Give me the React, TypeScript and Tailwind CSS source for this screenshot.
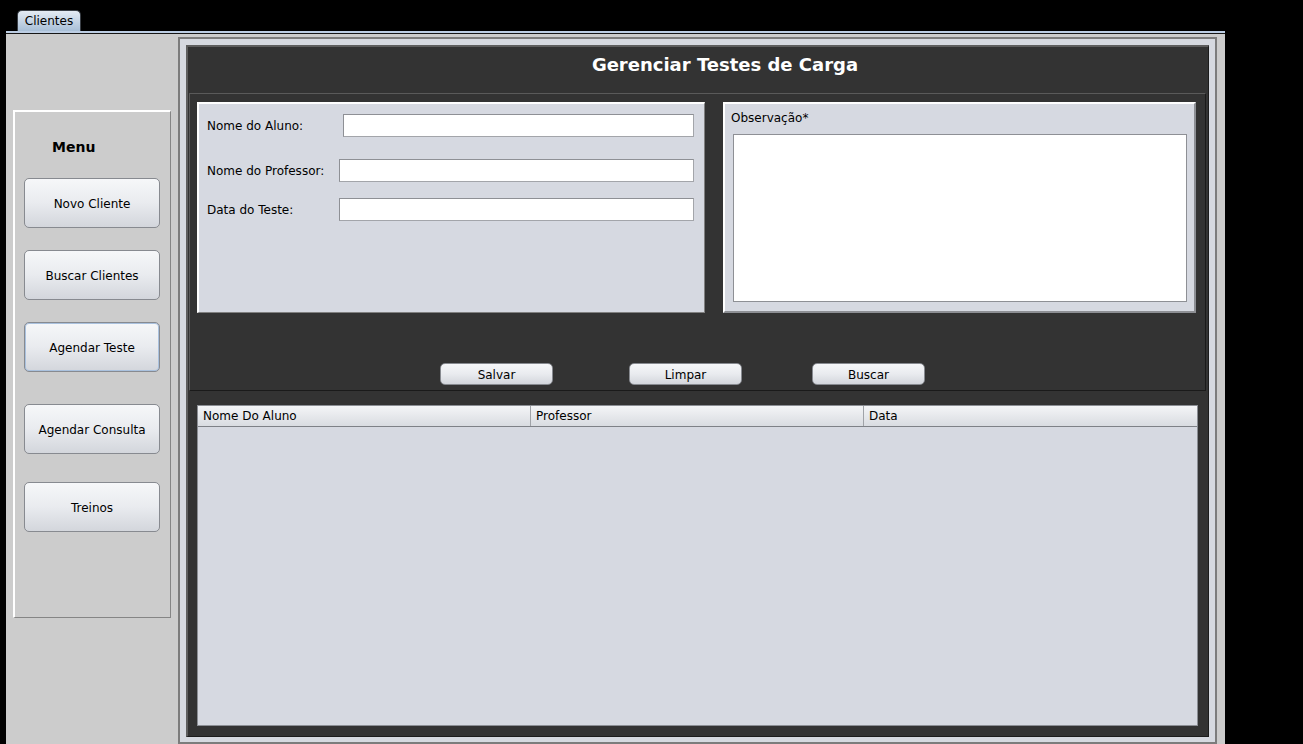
const BTN =
  'flex items-center justify-center pt-[1px] rounded-[5px] border border-[#878a90] bg-gradient-to-b from-[#f6f7f9] via-[#e9ebef] to-[#d3d6dc] text-[12px] text-black';

const INPUT = 'h-[23px] ml-auto mr-[10px] bg-white border border-[#a3a5aa] border-t-[#8e9095] border-l-[#8e9095]';

function MenuButton({ label, focused, mt }: { label: string; focused?: boolean; mt: string }) {
  return (
    <div
      className={`${BTN} ${mt} ml-[9px] w-[136px] h-[50px] ${
        focused ? 'border-[#7d9ec9] shadow-[0_0_0_1px_#a9c1de_inset]' : ''
      }`}
    >
      {label}
    </div>
  );
}

export default function App() {
  return (
    <div className="w-[1303px] h-[744px] bg-black overflow-hidden font-['DejaVu_Sans','Liberation_Sans',sans-serif] text-[12px] text-black">
      {/* tab strip */}
      <div className="h-[31px] pl-[17px] pt-[10px] flex">
        <div className="h-[21px] w-[64px] rounded-t-[5px] border border-b-0 border-[#3a3f46] bg-gradient-to-b from-[#e4ebf3] to-[#a8bfd7] flex items-center justify-center">
          Clientes
        </div>
      </div>

      <div className="ml-[6px] w-[1219px]">
        <div className="h-[2px] bg-[#bccde3]" />
        <div className="h-[1px] bg-[#161616]" />
        <div className="h-[710px] bg-[#cccccc] flex">
          {/* left menu column */}
          <div className="w-[172px] shrink-0 pt-[76px] pl-[7px]">
            <div className="w-[158px] h-[508px] border-t-2 border-l-2 border-white border-r border-b border-r-[#858585] border-b-[#858585] flex flex-col">
              <div className="pt-[27px] pl-[37px] h-[44px] leading-[17px] text-[14px] font-bold">Menu</div>
              <MenuButton label="Novo Cliente" mt="mt-[22px]" />
              <MenuButton label="Buscar Clientes" mt="mt-[22px]" />
              <MenuButton label="Agendar Teste" mt="mt-[22px]" focused />
              <MenuButton label="Agendar Consulta" mt="mt-[32px]" />
              <MenuButton label="Treinos" mt="mt-[28px]" />
            </div>
          </div>

          {/* main area */}
          <div className="flex-1 pt-[3px]">
            <div className="w-[1039px] h-[707px] border-2 border-[#7c7c7c] bg-[#d6d9e0] px-[6px] pt-[6px] pb-[5px] flex flex-col">
              <div className="flex-1 bg-[#333333] border-t-2 border-l-2 border-[#5e5e5e] border-r border-b border-r-[#1c1c1c] border-b-[#1c1c1c] flex flex-col">
                <div className="h-[46px] pt-[7px] pl-[54px] text-center text-white font-bold text-[18px] leading-[22px]">
                  Gerenciar Testes de Carga
                </div>

                {/* form panel */}
                <div className="ml-[1px] mr-[2px] border-t border-l border-[#5a5a5a] border-r border-b border-r-[#1a1a1a] border-b-[#1a1a1a] pt-[8px] pb-[5px]">
                  <div className="flex pl-[7px]">
                    <div className="w-[508px] h-[211px] bg-[#d6d9e1] border-t-2 border-l-2 border-white border-r border-b border-r-[#808080] border-b-[#808080] pt-[10px] flex flex-col">
                      <div className="flex items-center h-[23px]">
                        <span className="pl-[8px]">Nome do Aluno:</span>
                        <div className={`${INPUT} w-[351px]`} />
                      </div>
                      <div className="flex items-center h-[23px] mt-[22px]">
                        <span className="pl-[8px]">Nome do Professor:</span>
                        <div className={`${INPUT} w-[355px]`} />
                      </div>
                      <div className="flex items-center h-[23px] mt-[16px]">
                        <span className="pl-[8px]">Data do Teste:</span>
                        <div className={`${INPUT} w-[355px]`} />
                      </div>
                    </div>
                    <div className="ml-[18px] w-[473px] h-[211px] bg-[#d6d9e1] border-t-2 border-l-2 border-white border-r-2 border-b-2 border-r-[#8d8f94] border-b-[#8d8f94] flex flex-col pl-[8px] pr-[7px] pb-[9px]">
                      <div className="h-[30px] pt-[7px] -ml-[2px] leading-[15px]">Observação*</div>
                      <div className="flex-1 bg-white border border-[#8e9095]" />
                    </div>
                  </div>

                  <div className="flex mt-[50px] pl-[250px]">
                    <div className={`${BTN} w-[113px] h-[22px]`}>Salvar</div>
                    <div className={`${BTN} w-[113px] h-[22px] ml-[76px]`}>Limpar</div>
                    <div className={`${BTN} w-[113px] h-[22px] ml-[70px]`}>Buscar</div>
                  </div>
                </div>

                {/* table */}
                <div className="flex-1 mt-[14px] mb-[10px] ml-[9px] w-[1001px] bg-[#d6d9e1] border border-[#8b8e94] flex flex-col">
                  <div className="h-[21px] flex border-b border-[#7e8187] bg-gradient-to-b from-[#f4f5f7] to-[#d9dce1]">
                    <div className="w-[333px] border-r border-[#a0a3a8] pl-[5px] leading-[20px]">Nome Do Aluno</div>
                    <div className="w-[333px] border-r border-[#a0a3a8] pl-[5px] leading-[20px]">Professor</div>
                    <div className="flex-1 pl-[5px] leading-[20px]">Data</div>
                  </div>
                </div>
              </div>
            </div>
          </div>
        </div>
      </div>
    </div>
  );
}
